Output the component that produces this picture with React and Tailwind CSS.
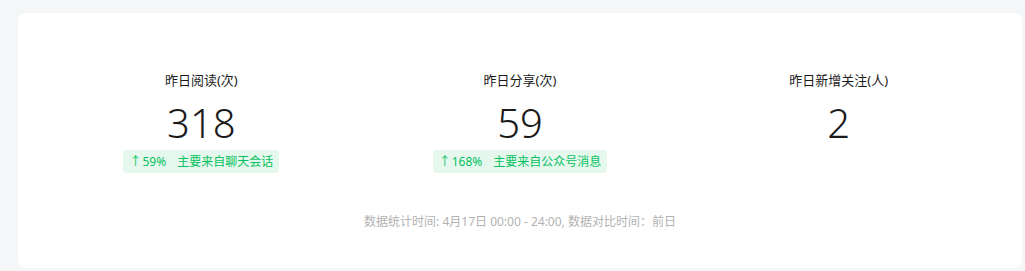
import * as React from 'react';

const stats = [
    { label: '昨日阅读(次)', value: '318', rate: '59%', source: '主要来自聊天会话' },
    { label: '昨日分享(次)', value: '59', rate: '168%', source: '主要来自公众号消息' },
    { label: '昨日新增关注(人)', value: '2' },
];

const font = { fontFamily: '"Noto Sans", "Noto Sans CJK SC", sans-serif' };

const StatItem = ({ item }) => (
    <div className="flex flex-col items-center">
        <p className="text-[13px] leading-[20px] text-[#1a1a1a]">{item.label}</p>
        <p className="mt-[10px] text-[40px] font-light leading-[46px] text-[#1a1a1a]">{item.value}</p>
        {item.rate && (
            <div className="mt-[4px] flex h-[23px] items-center rounded-[4px] bg-[#e6f8ee] px-[6px] text-[12px] text-[#07c160]">
                <span className="mr-[1px]">↑</span>
                <span>{item.rate}</span>
                <span className="ml-[11px]">{item.source}</span>
            </div>
        )}
    </div>
);

export default function App() {
    return (
        <div className="h-[271px] w-full bg-[#f5f6f7] pl-[18px] pr-[3px] pt-[13px]" style={font}>
            <div className="h-[255px] rounded-[8px] bg-white px-[24px] pt-[57px]">
                <div className="grid grid-cols-3">
                    {stats.map((item) => (
                        <StatItem key={item.label} item={item} />
                    ))}
                </div>
                <p className="mt-[39px] text-center text-[12px] leading-[20px] text-[#b2b2b2]">
                    数据统计时间: 4月17日 00:00 - 24:00, 数据对比时间：前日
                </p>
            </div>
        </div>
    );
}
